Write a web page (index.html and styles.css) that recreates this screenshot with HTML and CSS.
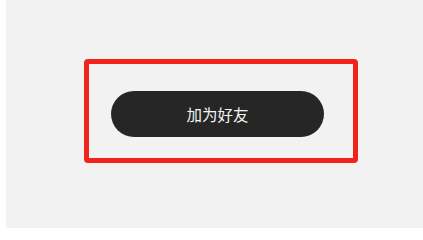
FILE: index.html
```html
<!DOCTYPE html>
<html lang="zh">
<head>
<meta charset="utf-8">
<link rel="stylesheet" href="styles.css">
</head>
<body>
<main class="canvas">
  <div class="highlight">
    <button class="add-friend">加为好友</button>
  </div>
</main>
</body>
</html>
```
FILE: styles.css
```css
html, body {
  margin: 0;
  padding: 0;
  background: #ffffff;
}
.canvas {
  margin-left: 6px;
  height: 228px;
  background: #f2f2f2;
  padding: 59px 0 0 78px;
  box-sizing: border-box;
}
.highlight {
  display: flex;
  width: 274px;
  height: 104px;
  box-sizing: border-box;
  border: 5px solid #f2231b;
  border-radius: 4px;
  padding: 27px 29px 21px 22px;
}
.add-friend {
  width: 213px;
  height: 46px;
  border: none;
  border-radius: 23px;
  background: #262626;
  color: #f4f4f4;
  font-family: "Noto Sans CJK SC", "Noto Sans", sans-serif;
  font-size: 15.5px;
  padding: 0;
  margin: 0;
  letter-spacing: 0;
}
```
